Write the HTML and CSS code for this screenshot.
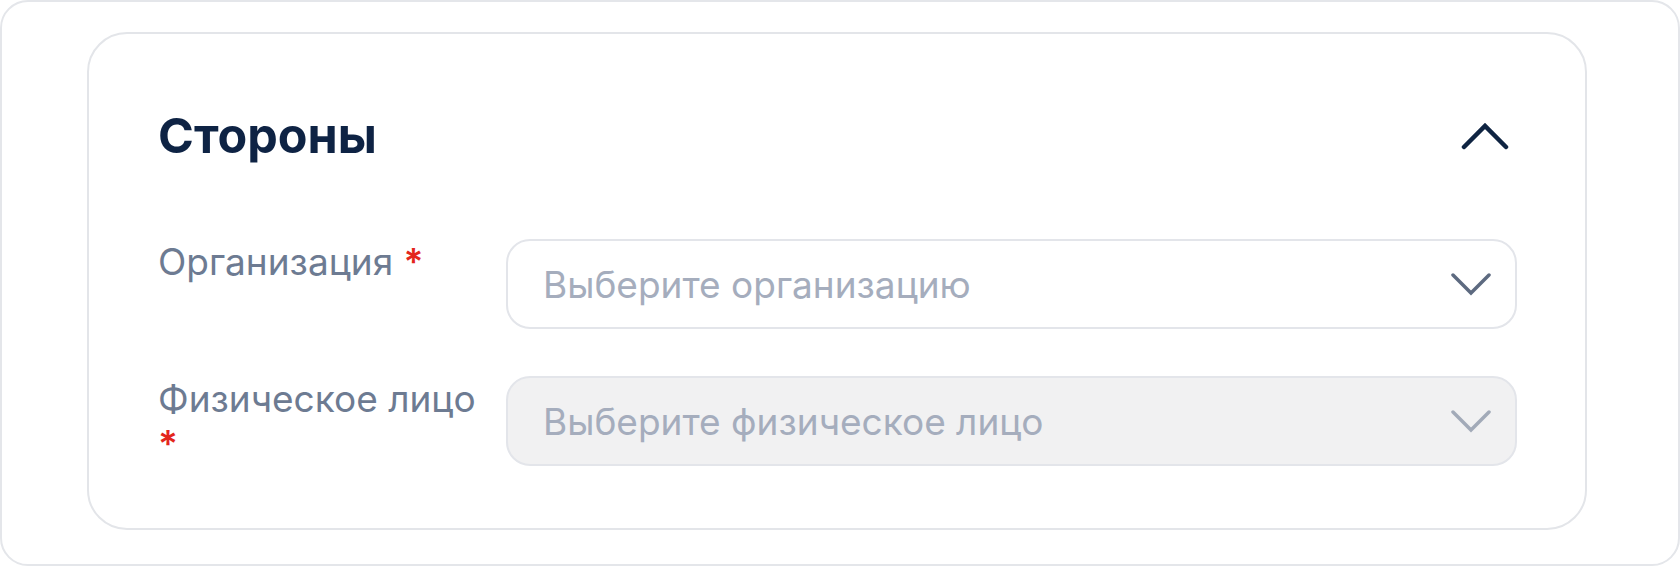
FILE: index.html
```html
<!DOCTYPE html>
<html lang="ru">
<head>
<meta charset="utf-8">
<link rel="stylesheet" href="styles.css">
</head>
<body>
<div class="frame">
  <section class="card">
    <header class="card-head">
      <h2 class="title">Стороны</h2>
      <button class="toggle" type="button" aria-label="Свернуть">
        <svg width="48" height="28" viewBox="0 0 48 28"><polyline points="3,25 24,4 45,25" fill="none" stroke="#0f2442" stroke-width="4.5" stroke-linecap="round" stroke-linejoin="miter"/></svg>
      </button>
    </header>
    <div class="fields">
      <div class="row">
        <label class="label">Организация <span class="req">*</span></label>
        <div class="select">
          <span class="placeholder">Выберите организацию</span>
          <svg class="chev" width="40" height="24" viewBox="0 0 40 24"><polyline points="2,3 20,21 38,3" fill="none" stroke="#5d6a80" stroke-width="3.5" stroke-linecap="round"/></svg>
        </div>
      </div>
      <div class="row">
        <label class="label"><span class="nowrap">Физическое лицо</span> <span class="req">*</span></label>
        <div class="select disabled">
          <span class="placeholder">Выберите физическое лицо</span>
          <svg class="chev" width="40" height="24" viewBox="0 0 40 24"><polyline points="2,3 20,21 38,3" fill="none" stroke="#a2aab8" stroke-width="3.5" stroke-linecap="round"/></svg>
        </div>
      </div>
    </div>
  </section>
</div>
</body>
</html>
```
FILE: styles.css
```css
* { box-sizing: border-box; }
html, body { margin: 0; padding: 0; background: #ffffff; }
body { font-family: Inter, "Noto Sans", "Liberation Sans", sans-serif; }

.frame {
  width: 1680px;
  height: 566px;
  border: 2px solid #e4e6ea;
  border-radius: 28px;
  padding: 30px 0 0 85px;
  background: #fff;
}

.card {
  width: 1500px;
  height: 498px;
  border: 2px solid #e3e5e9;
  border-radius: 40px;
  padding: 73px 68px 0 69px;
}

.card-head {
  display: flex;
  align-items: center;
  justify-content: space-between;
  height: 58px;
}

.title {
  margin: 0;
  font-size: 48.5px;
  line-height: 58px;
  font-weight: 700;
  color: #0e2344;
}

.toggle {
  border: 0;
  background: none;
  padding: 0;
  margin-right: 8px;
  display: flex;
  width: 48px;
  height: 28px;
}

.fields {
  margin-top: 74px;
  display: flex;
  flex-direction: column;
  gap: 47px;
}

.row {
  display: flex;
  align-items: flex-start;
  gap: 32px;
}

.label {
  width: 316px;
  flex: none;
  font-size: 37px;
  line-height: 45px;
  color: #6d7b92;
}

.nowrap { white-space: nowrap; }

.req { color: #e3261c; font-weight: 600; }

.select {
  flex: 1;
  height: 90px;
  border: 2px solid #e3e5ea;
  border-radius: 24px;
  background: #fff;
  display: flex;
  align-items: center;
  justify-content: space-between;
  padding: 0 24px 0 35px;
}

.select.disabled {
  background: #f1f1f2;
}

.placeholder {
  font-size: 37px;
  color: #a5adbd;
}

.chev { flex: none; }
```
